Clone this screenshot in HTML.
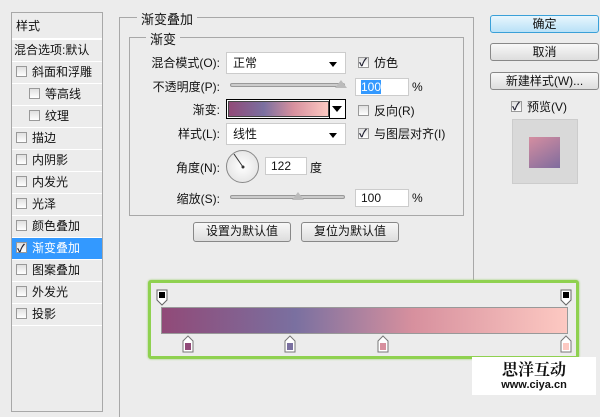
<!DOCTYPE html>
<html><head><meta charset="utf-8"><style>
*{margin:0;padding:0;box-sizing:border-box}
body{width:600px;height:400px;background:#ececec;position:relative;overflow:hidden;font-family:"Liberation Sans","Noto Sans CJK SC","WenQuanYi Zen Hei",sans-serif;font-size:12px;color:#111}
.a{position:absolute}
.lp{left:11px;top:12px;width:92px;height:400px;border:1px solid #a8a8a8;background:#ececec}
.row{position:absolute;left:0;width:90px;height:22px;border-bottom:1px solid #fff;line-height:21px;font-size:12px}
.cb{display:inline-block;width:11px;height:11px;border:1px solid #999;background:linear-gradient(#e0e0e0,#fff);vertical-align:middle;margin:-2px 5px 0 0;position:relative}
.ck::after{content:"✓";position:absolute;left:0;top:-4px;font-size:11px;color:#223;font-weight:bold}
.lbl{position:absolute;text-align:right;width:100px;font-size:12px}
.sel{background:#fff;border:1px solid #ccc;height:22px;line-height:20px;padding-left:6px}
.sel::after{content:"";position:absolute;right:8px;top:9px;border:4px solid transparent;border-top:5px solid #000}
.sl{height:4px;border:1px solid #999;border-radius:2px;background:#ccc}
.inp{background:#fff;border:1px solid #ccc;height:18px;line-height:16px;padding-left:5px}
.btn{border:1px solid #888;border-radius:3px;background:linear-gradient(#f8f8f8,#ddd);text-align:center;line-height:17px;font-size:12px}
</style></head><body>
<div class="a lp">
<div class="row" style="top:3px;height:23px;padding-left:4px">样式</div>
<div class="row" style="top:26px;height:23px;padding-left:2px;border-top:1px solid #fff">混合选项:默认</div>
<div class="row" style="top:49px;padding-left:4px"><span class="cb"></span>斜面和浮雕</div>
<div class="row" style="top:71px;padding-left:17px"><span class="cb"></span>等高线</div>
<div class="row" style="top:93px;padding-left:17px"><span class="cb"></span>纹理</div>
<div class="row" style="top:115px;padding-left:4px"><span class="cb"></span>描边</div>
<div class="row" style="top:137px;padding-left:4px"><span class="cb"></span>内阴影</div>
<div class="row" style="top:159px;padding-left:4px"><span class="cb"></span>内发光</div>
<div class="row" style="top:181px;padding-left:4px"><span class="cb"></span>光泽</div>
<div class="row" style="top:203px;padding-left:4px"><span class="cb"></span>颜色叠加</div>
<div class="row" style="top:225px;padding-left:4px;background:#3399ff;color:#fff"><span class="cb ck"></span>渐变叠加</div>
<div class="row" style="top:247px;padding-left:4px"><span class="cb"></span>图案叠加</div>
<div class="row" style="top:269px;padding-left:4px"><span class="cb"></span>外发光</div>
<div class="row" style="top:291px;padding-left:4px"><span class="cb"></span>投影</div>
</div>
<!-- outer group -->
<div class="a" style="left:119px;top:17px;width:355px;height:400px;border-left:1px solid #a8a8a8;border-top:1px solid #a8a8a8"></div>
<div class="a" style="left:473px;top:17px;width:1px;height:264px;background:#a8a8a8"></div>
<div class="a" style="left:137px;top:9px;background:#ececec;padding:0 4px;font-size:13px">渐变叠加</div>
<div class="a" style="left:129px;top:37px;width:335px;height:179px;border:1px solid #a8a8a8"></div>
<div class="a" style="left:146px;top:29px;background:#ececec;padding:0 4px;font-size:13px">渐变</div>

<div class="a lbl" style="left:120px;top:54px">混合模式(O):</div>
<div class="a sel" style="left:226px;top:52px;width:120px">正常</div>
<div class="a" style="left:358px;top:54px"><span class="cb ck"></span>仿色</div>

<div class="a lbl" style="left:120px;top:78px">不透明度(P):</div>
<div class="a sl" style="left:230px;top:83px;width:115px"></div>
<div class="a" style="left:335px;top:80px;border:6px solid transparent;border-bottom:8px solid #bbb;border-top:0"></div>
<div class="a inp" style="left:355px;top:78px;width:54px"><span style="background:#3399ff;color:#fff">100</span></div>
<div class="a" style="left:412px;top:80px">%</div>

<div class="a lbl" style="left:120px;top:101px">渐变:</div>
<div class="a" style="left:226px;top:99px;width:120px;height:20px;border:1px solid #000;background:#fff;padding:1px">
<div style="width:101px;height:16px;border:1px solid #444;background:linear-gradient(90deg,#914a78 0%,#7a70a0 35%,#d7909e 65%,#fdc9c2 100%)"></div>
<div style="position:absolute;right:0;top:0;width:16px;height:18px;border-left:1px solid #000"></div>
<div style="position:absolute;right:3px;top:6px;border:5px solid transparent;border-top:6px solid #000"></div>
</div>
<div class="a" style="left:358px;top:102px"><span class="cb"></span>反向(R)</div>

<div class="a lbl" style="left:120px;top:125px">样式(L):</div>
<div class="a sel" style="left:226px;top:123px;width:120px">线性</div>
<div class="a" style="left:358px;top:125px"><span class="cb ck"></span>与图层对齐(I)</div>

<div class="a lbl" style="left:120px;top:159px">角度(N):</div>
<div class="a" style="left:226px;top:150px;width:33px;height:33px;border:1px solid #888;border-radius:50%;background:radial-gradient(#fff,#ddd)"></div>
<svg class="a" style="left:226px;top:150px" width="34" height="34"><line x1="17" y1="17" x2="8" y2="4" stroke="#333" stroke-width="1"/><circle cx="17" cy="17" r="1.5" fill="#333"/></svg>
<div class="a inp" style="left:265px;top:157px;width:42px">122</div>
<div class="a" style="left:310px;top:159px">度</div>

<div class="a lbl" style="left:120px;top:190px">缩放(S):</div>
<div class="a sl" style="left:230px;top:195px;width:115px"></div>
<div class="a" style="left:292px;top:192px;border:6px solid transparent;border-bottom:8px solid #bbb;border-top:0"></div>
<div class="a inp" style="left:355px;top:189px;width:54px">100</div>
<div class="a" style="left:412px;top:191px">%</div>

<div class="a btn" style="left:193px;top:222px;width:98px;height:20px">设置为默认值</div>
<div class="a btn" style="left:301px;top:222px;width:98px;height:20px">复位为默认值</div>

<div class="a btn" style="left:490px;top:15px;width:109px;height:18px;border-color:#3aa0d8;background:linear-gradient(#e8f6fd,#b9e1f7)">确定</div>
<div class="a btn" style="left:490px;top:43px;width:109px;height:18px">取消</div>
<div class="a btn" style="left:490px;top:72px;width:109px;height:18px">新建样式(W)...</div>
<div class="a" style="left:511px;top:98px"><span class="cb ck"></span>预览(V)</div>
<div class="a" style="left:512px;top:119px;width:66px;height:65px;background:#d9d9d9;border:1px solid #ccc"></div>
<div class="a" style="left:529px;top:137px;width:31px;height:31px;background:linear-gradient(150deg,#d58ea0,#7f6c9e)"></div>

<!-- gradient editor -->
<div class="a" style="left:148px;top:280px;width:431px;height:79px;border:3px solid #8fd150;border-radius:3px;background:#ececec;box-shadow:0 0 2px #9c6"></div>
<div class="a" style="left:161px;top:307px;width:407px;height:27px;border:1px solid #999;background:linear-gradient(90deg,#914a78 0%,#7a70a0 33%,#d7909e 62%,#fdc9c2 100%)"></div>
<svg class="a" style="left:156px;top:289px" width="420" height="66">
<g stroke="#666" fill="#fff"><path d="M1 1h10v10l-5 5-5-5z"/><path d="M405 1h10v10l-5 5-5-5z"/></g>
<rect x="3" y="3" width="6" height="6" fill="#000"/><rect x="407" y="3" width="6" height="6" fill="#000"/>
<g stroke="#777" fill="#fff">
<path d="M27 52l5-5 5 5v11h-10z"/><path d="M129 52l5-5 5 5v11h-10z"/><path d="M222 52l5-5 5 5v11h-10z"/><path d="M405 52l5-5 5 5v11h-10z"/></g>
<rect x="29" y="54" width="6" height="7" fill="#914a78"/><rect x="131" y="54" width="6" height="7" fill="#7a70a0"/><rect x="224" y="54" width="6" height="7" fill="#d7909e"/><rect x="407" y="54" width="6" height="7" fill="#fdc9c2"/>
</svg>
<div class="a" style="left:472px;top:357px;width:124px;height:38px;background:#fff;text-align:center">
<div style="font-size:16px;font-weight:bold;line-height:20px;margin-top:2px;font-family:'Noto Serif CJK SC',serif">思洋互动</div>
<div style="font-size:11px;font-weight:bold;line-height:12px">www.ciya.cn</div></div>
</body></html>
